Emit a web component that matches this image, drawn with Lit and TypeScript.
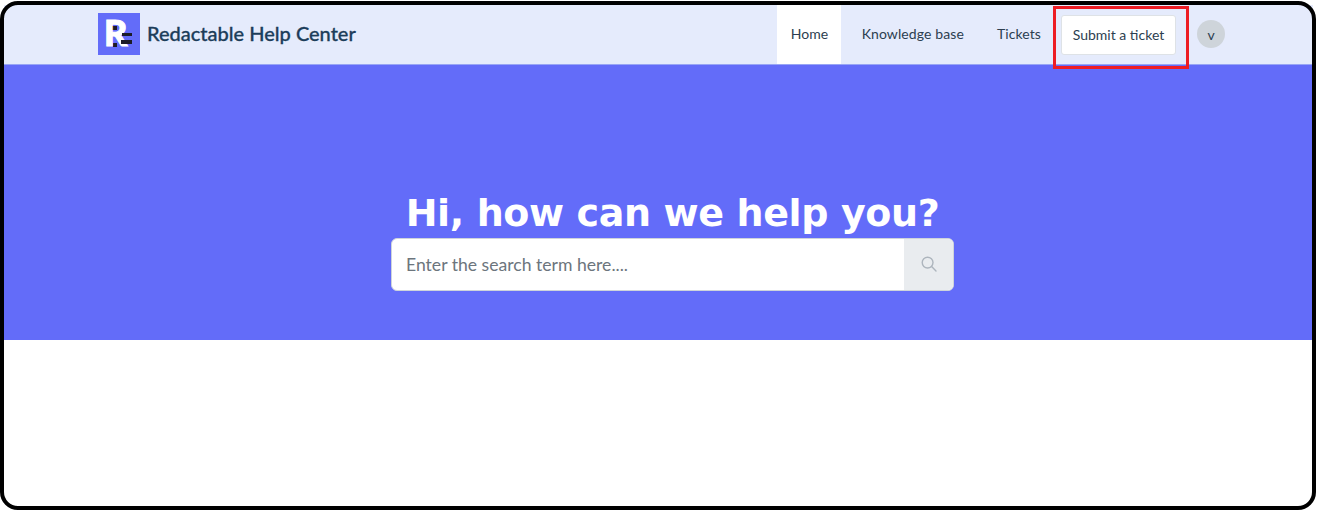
import { LitElement, css, html } from 'lit';
import { customElement } from 'lit/decorators.js';

@customElement('app-root')
export class AppRootElement extends LitElement {
	static styles = css`
		:host {
			display: block;
			font-family: Lato, 'Liberation Sans', sans-serif;
			background: #fff;
		}

		.frame {
			position: relative;
			box-sizing: border-box;
			height: 510px;
			width: 1317px;
			padding-top: 1px;
			background: #fff;
		}

		.border {
			position: absolute;
			inset: 1px 1px 0 0;
			border: 4px solid #000;
			border-radius: 18px;
			pointer-events: none;
		}

		.page {
			margin: 0 4px;
		}

		.header {
			display: flex;
			align-items: center;
			box-sizing: border-box;
			height: 60px;
			margin-top: 4px;
			padding: 0 88px 0 94px;
			background: #e5ebfc;
			border-bottom: 1px solid #98a5f5;
		}

		.brand-group {
			display: flex;
			align-items: center;
			padding-bottom: 2px;
		}

		.logo {
			display: block;
			width: 42px;
			height: 42px;
			margin-right: 7px;
			overflow: visible;
		}

		.logo text {
			font-family: Lato, sans-serif;
			font-size: 36px;
			font-weight: 900;
			fill: #fff;
			stroke: #fff;
			stroke-width: 1px;
		}

		.brand {
			padding-bottom: 2px;
			font-size: 20px;
			font-weight: 500;
			color: #1c3d5a;
			-webkit-text-stroke: 0.3px #1c3d5a;
		}

		.nav {
			display: flex;
			align-items: center;
			align-self: stretch;
			margin-left: auto;
			font-size: 14px;
			color: #2c3e50;
		}

		.link {
			box-sizing: border-box;
			display: flex;
			align-items: center;
			padding: 0 14px 2px;
			height: 59px;
			letter-spacing: 0.1px;
		}

		.link.active {
			width: 64px;
			background: #fff;
			margin-right: 7px;
		}

		.link.tickets {
			margin-left: 5px;
			padding-right: 6px;
			padding-left: 14px;
		}

		.submit {
			box-sizing: border-box;
			display: flex;
			align-items: center;
			justify-content: center;
			width: 115px;
			height: 40px;
			margin: 1px 0 0 14px;
			padding-bottom: 1px;
			background: #fff;
			border: 1px solid #dee2e6;
			border-radius: 3px;
		}

		.avatar {
			display: flex;
			align-items: center;
			justify-content: center;
			width: 28px;
			height: 28px;
			margin: 0 0 1px 21px;
			border-radius: 50%;
			background: #ced4da;
		}

		.hero {
			display: flex;
			flex-direction: column;
			align-items: center;
			box-sizing: border-box;
			height: 275px;
			padding: 124px 0 0 28px;
			background: #636cf9;
		}

		h1 {
			margin: 0;
			font-family: 'DejaVu Sans', Verdana, sans-serif;
			font-size: 38px;
			font-weight: 700;
			line-height: 48px;
			letter-spacing: -0.38px;
			color: #fff;
		}

		.search {
			display: flex;
			box-sizing: border-box;
			width: 563px;
			height: 53px;
			margin-top: 1px;
			border: 1px solid #ced4da;
			border-radius: 6px;
			overflow: hidden;
			background: #fff;
		}

		.placeholder {
			flex: 1;
			display: flex;
			align-items: center;
			padding: 0 0 1px 14px;
			font-size: 17.6px;
			color: #6c757d;
		}

		.search-btn {
			display: flex;
			align-items: center;
			justify-content: center;
			width: 49px;
			padding-bottom: 2px;
			background: #e9ecef;
		}

		.annotation {
			position: absolute;
			left: 1053px;
			top: 6px;
			box-sizing: border-box;
			width: 136px;
			height: 63px;
			border: 3px solid #ed1c24;
		}
	`;

	render() {
		return html`
			<div class="frame">
				<div class="page">
					<header class="header">
						<div class="brand-group">
							<svg class="logo" viewBox="0 0 42 42">
								<rect width="42" height="42" fill="#636cf9" />
								<rect x="14" y="13" width="5" height="4" fill="#1c1c28" />
								<rect x="15" y="30" width="4" height="4" fill="#1c1c28" />
								<text x="6" y="33">R</text>
								<rect x="24" y="20" width="10" height="3" fill="#1c1c28" />
								<rect x="23" y="27" width="11" height="4" fill="#1c1c28" />
							</svg>
							<span class="brand">Redactable Help Center</span>
						</div>
						<nav class="nav">
							<span class="link active">Home</span>
							<span class="link">Knowledge base</span>
							<span class="link tickets">Tickets</span>
							<span class="submit">Submit a ticket</span>
							<span class="avatar">v</span>
						</nav>
					</header>
					<section class="hero">
						<h1>Hi, how can we help you?</h1>
						<div class="search">
							<div class="placeholder">Enter the search term here....</div>
							<div class="search-btn">
								<svg width="16" height="16" viewBox="0 0 16 16" fill="none" stroke="#adb5bd" stroke-width="1.4">
									<circle cx="6.6" cy="6.6" r="5.4" />
									<line x1="10.6" y1="10.6" x2="15" y2="15" stroke-linecap="round" />
								</svg>
							</div>
						</div>
					</section>
				</div>
				<div class="border"></div>
				<div class="annotation"></div>
			</div>
		`;
	}
}
